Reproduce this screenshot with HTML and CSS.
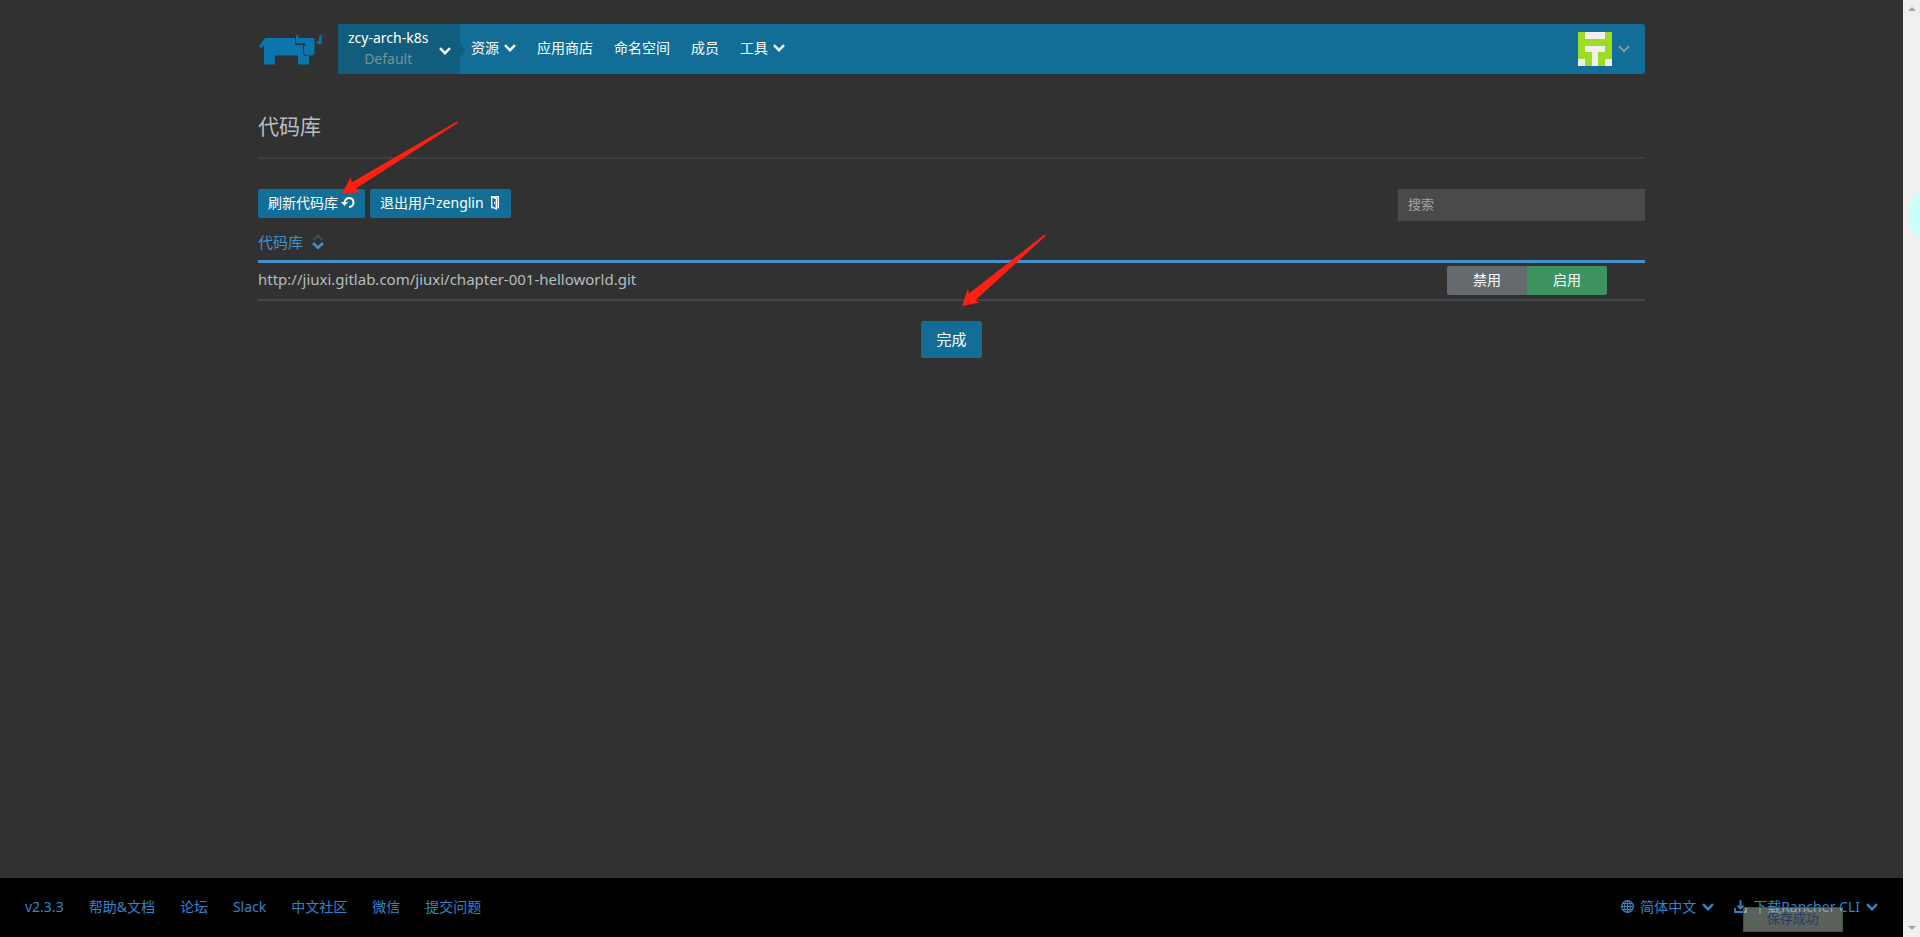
FILE: index.html
```html
<!DOCTYPE html>
<html lang="zh-CN">
<head>
<meta charset="utf-8">
<meta name="viewport" content="width=device-width, initial-scale=1">
<title>代码库</title>
<link rel="stylesheet" href="styles.css">
</head>
<body>
<svg class="defs" aria-hidden="true">
  <symbol id="chevron" viewBox="0 0 12 8"><path d="M1 1.2 6 6.2 11 1.2" fill="none" stroke="currentColor" stroke-width="2.4"/></symbol>
</svg>
<div class="page">
  <div class="container">
    <header class="header">
      <a class="logo" href="#" aria-label="Rancher">
        <svg viewBox="0 0 68 32" width="68" height="32">
          <path fill="#0a76ac" d="M7 5H37V10Q37 12 39 12H45V20Q45 23 48 23H51V30.500Q51 31.500 50 31.500H41Q40 31.500 40 30.500V22.500H17V30.500Q17 31.500 16 31.500H7Q6 31.500 6 30.500V12L3 15.500L1 13.500Z"/>
          <path fill="#0a76ac" d="M38 3 39.500 1.500 40.500 5H55Q56.500 5 56.500 6.500V20.500L54.500 22.500H48L46 20V13Q47.500 13 47.500 10.500H39.500Q38 10.500 38 9ZM58 8.500H61V4L63.500 1V10Q63.500 11 62.500 11H59.500Z"/>
          <circle cx="66" cy="3.500" r="1.500" fill="none" stroke="#16506d"/>
        </svg>
      </a>
      <nav class="navbar">
        <button class="cluster" type="button">
          <span class="cluster-text"><span>zcy-arch-k8s</span><span class="project">Default</span></span>
          <svg class="chevron"><use href="#chevron"/></svg>
        </button>
        <div class="menu">
          <button type="button">资源<svg class="chevron"><use href="#chevron"/></svg></button>
          <a href="#">应用商店</a>
          <a href="#">命名空间</a>
          <a href="#">成员</a>
          <button type="button">工具<svg class="chevron"><use href="#chevron"/></svg></button>
        </div>
        <button class="user" type="button" aria-label="用户">
          <svg width="34" height="34" viewBox="0 0 10 10" shape-rendering="crispEdges"><path fill="#9cdc24" d="M0 0h10v10H0z"/><path fill="#f0f0f0" d="M2 0h6v2H2zM2 4h6v2H6v4H4V6H2zM0 8h2v2H0zM8 8h2v2H8z"/></svg>
          <svg class="chevron" viewBox="0 0 12 8"><path d="M1 1.200 6 6.200 11 1.200" fill="none" stroke="currentColor" stroke-width="1.900"/></svg>
        </button>
      </nav>
    </header>
    <main>
      <h1>代码库</h1>
      <div class="toolbar">
        <button class="btn" type="button">刷新代码库
          <svg width="14" height="13" viewBox="0 0 14 13"><path d="M3.500 6.500Q4.500 2 8.500 2Q12.500 2.500 12.500 6.500Q12.300 10.500 8 11" fill="none" stroke="currentColor" stroke-width="2"/><path fill="currentColor" d="M0 6H7L3.500 10Z"/></svg>
        </button>
        <button class="btn" type="button">退出用户zenglin
          <svg class="door" width="8" height="14" viewBox="0 0 8 14" fill="none" stroke="currentColor"><path d="M3 11.500H.7V.7H7.300V11.500H6M1 .8 5.300 2.500V13L3 11.800" stroke-width="1.400"/><path d="M3.500 6V8"/></svg>
        </button>
        <input class="search" type="search" placeholder="搜索" aria-label="搜索">
      </div>
      <table class="repos">
        <thead><tr><th colspan="2"><button type="button">代码库
          <svg width="12" height="16" viewBox="0 0 12 16" fill="none" stroke="currentColor"><path d="M1.500 6 6 1.500 10.500 6" stroke-width="2" opacity=".35"/><path d="M1 9 6 13.800 11 9" stroke-width="2.600"/></svg></button></th></tr></thead>
        <tbody><tr>
          <td class="url">http://jiuxi.gitlab.com/jiuxi/chapter-001-helloworld.git</td>
          <td class="actions"><div class="toggle"><button type="button">禁用</button><button class="on" type="button">启用</button></div></td>
        </tr></tbody>
      </table>
      <div class="done"><button class="btn btn-lg" type="button">完成</button></div>
    </main>
  </div>
  <footer class="footer">
    <nav class="links">
      <a href="#">v2.3.3</a><a href="#">帮助&amp;文档</a><a href="#">论坛</a><a href="#">Slack</a><a href="#">中文社区</a><a href="#">微信</a><a href="#">提交问题</a>
    </nav>
    <div class="links links-right">
      <button type="button"><svg width="13" height="13" viewBox="0 0 13 13" fill="none" stroke="currentColor"><circle cx="6.500" cy="6.500" r="5.800" stroke-width="1.300"/><ellipse cx="6.500" cy="6.500" rx="3" ry="5.800"/><path d="M6.500 0V13M0 6.500H13M1.500 3.500H11.500M1.500 9.500H11.500"/></svg>简体中文<svg class="chevron"><use href="#chevron"/></svg></button>
      <button type="button"><svg width="13" height="13" viewBox="0 0 13 13" fill="none" stroke="currentColor" stroke-width="1.800"><path d="M6.500 0V8.500M3.500 5.500 6.500 8.700 9.500 5.500M1 8V12H12V8"/></svg>下载Rancher CLI<svg class="chevron"><use href="#chevron"/></svg></button>
    </div>
  </footer>
</div>
<div class="scrollbar" aria-hidden="true"><i class="up"></i><i class="down"></i></div>
<div class="bubble" aria-hidden="true"></div>
<div class="toast" role="status">保存成功</div>
<svg class="arrow arrow-refresh" width="118" height="74" viewBox="0 0 118 74" aria-hidden="true"><path fill="#ff2011" d="M0 72 9 56 9.500 61.500L114 1Q117 0 115 2.500L14 67.500L18 71.500Z"/></svg>
<svg class="arrow arrow-done" width="86" height="74" viewBox="0 0 86 74" aria-hidden="true"><path fill="#ff2011" d="M0 72 6 54.500 7 59.500L82 1Q85 0 83 2.500L13 66.500L18 68.500Z"/></svg>
</body>
</html>
```
FILE: styles.css
```css
* { box-sizing: border-box; }
body {
  margin: 0;
  display: flex;
  min-height: 100vh;
  background: #313131;
  color: #b6bec2;
  font: 14px/20px "Noto Sans", "Noto Sans CJK SC", sans-serif;
}
button, input { font: inherit; color: inherit; border: 0; background: none; padding: 0; margin: 0; }
button { cursor: pointer; }
a { color: inherit; text-decoration: none; }
svg { display: block; flex: none; }
.defs { position: absolute; width: 0; height: 0; }
.page { flex: 1; display: flex; flex-direction: column; }
.container { flex: 1; width: calc(100% - 40px); max-width: 1387px; margin: 0 auto; padding-top: 24px; }
.chevron { width: 12px; height: 8px; }

.header { display: flex; align-items: center; gap: 12px; }
.navbar { flex: 1; display: flex; height: 50px; background: #126e97; border-radius: 3px; color: #fff; }
.cluster { position: relative; width: 122px; display: flex; align-items: center; justify-content: space-between; padding: 0 9px 0 10px; background: #105d7d; }
.cluster::after { content: ""; position: absolute; left: 100%; top: 20px; border: 6px solid transparent; border-left-color: #105d7d; border-right: 0; }
.cluster .chevron { margin-top: 4px; }
.cluster-text { display: flex; flex-direction: column; padding-bottom: 2px; line-height: 21px; }
.project { color: #7d909b; }
.menu { flex: 1; display: flex; align-items: center; gap: 21px; padding: 0 0 2px 11px; }
.menu button { display: flex; align-items: center; gap: 5px; }
.user { display: flex; align-items: center; gap: 6px; padding: 0 15px 0 0; }
.user .chevron { color: #8b9ba5; }

h1 { margin: 0; padding: 37px 0 16px; border-bottom: 2px solid #3e3e3e; font-size: 21px; line-height: 30px; font-weight: 400; }
.toolbar { display: flex; align-items: flex-start; gap: 5px; padding-top: 30px; }
.btn { display: flex; align-items: center; gap: 3px; height: 29px; padding: 0 10px 2px; background: #126e97; border-radius: 2px; color: #fff; }
.door { margin: 0 2px 0 4px; }
.search { width: 247px; height: 32px; margin-left: auto; padding: 0 10px 2px; background: #4a4a4a; font-size: 13px; appearance: none; }
.search::placeholder { color: #a0a4a6; opacity: 1; }

.repos { width: 100%; border-collapse: collapse; font-size: 15px; }
.repos th { height: 40px; padding: 4px 0 0; border-bottom: 3px solid #4291cf; color: #4291cf; text-align: left; font-weight: 400; }
.repos th button { display: flex; align-items: center; gap: 9px; }
.repos td { height: 39px; padding: 0; border-bottom: 2px solid #42484c; }
.repos .url { padding-bottom: 4px; }
.repos .actions { width: 198px; }
.toggle { display: flex; width: 160px; border-radius: 2px; overflow: hidden; color: #fff; font-size: 14px; }
.toggle button { flex: 1; height: 29px; padding-bottom: 2px; background: #656a6e; }
.toggle .on { background: #3d945f; }
.done { display: flex; justify-content: center; padding-top: 20px; }
.btn-lg { height: 37px; padding: 0 15px 2px; font-size: 15px; }

.footer { display: flex; justify-content: space-between; align-items: center; height: 59px; padding: 0 25px 2px; background: #000; color: #2e86cb; }
.links { display: flex; gap: 25px; }
.links-right { gap: 20px; }
.links button { display: flex; align-items: center; gap: 6px; }

.scrollbar { width: 17px; display: flex; flex-direction: column; justify-content: space-between; align-items: center; padding: 7px 0; background: #f0f0f0; }
.up, .down { border: 4px solid transparent; }
.up { border-top: 0; border-bottom-color: #a3a3a3; }
.down { border-bottom: 0; border-top-color: #a3a3a3; }
.bubble { position: absolute; right: 0; top: 193px; width: 11px; height: 44px; border-radius: 11px 0 0 11px / 22px 0 0 22px; background: #c8fff8; }
.toast { position: fixed; right: 77px; bottom: 5px; width: 100px; height: 25px; border: 1px solid #3c593c; background: rgba(200, 212, 200, .45); color: #2a3a66; font-size: 13px; line-height: 20px; text-align: center; }
.arrow { position: absolute; pointer-events: none; }
.arrow-refresh { left: 342px; top: 121px; }
.arrow-done { left: 962px; top: 234px; }
```
